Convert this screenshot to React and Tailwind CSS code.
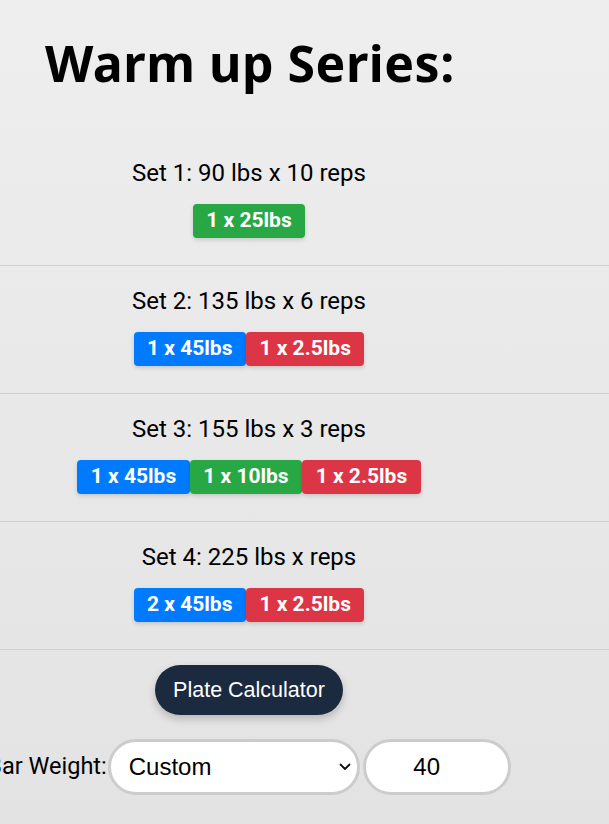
import React from "react";

const sets = [
  { label: "Set 1: 90 lbs x 10 reps", plates: [["1 x 25lbs", "bg-[#28a745]"]] },
  { label: "Set 2: 135 lbs x 6 reps", plates: [["1 x 45lbs", "bg-[#007bff]"], ["1 x 2.5lbs", "bg-[#dc3545]"]] },
  { label: "Set 3: 155 lbs x 3 reps", plates: [["1 x 45lbs", "bg-[#007bff]"], ["1 x 10lbs", "bg-[#28a745]"], ["1 x 2.5lbs", "bg-[#dc3545]"]] },
  { label: "Set 4: 225 lbs x reps", plates: [["2 x 45lbs", "bg-[#007bff]"], ["1 x 2.5lbs", "bg-[#dc3545]"]] },
];

export default function App() {
  return (
    <div className="w-[609px] h-[824px] overflow-hidden bg-gradient-to-b from-[#eeeeee] to-[#e3e3e3] text-black" style={{ fontFamily: "Roboto, sans-serif" }}>
      <div className="h-[138px] pl-[45px] pt-[29px]">
        <h1 className="text-[50px] font-bold leading-[68px] tracking-[0.5px]" style={{ fontFamily: "'Noto Sans', sans-serif" }}>
          Warm up Series:
        </h1>
      </div>
      {sets.map((s, i) => (
        <div key={i} className={`h-[128px] pt-5 ${i < 4 ? "border-b border-[#d0d0d0]" : ""}`}>
          <div className="w-[498px] flex flex-col items-center">
            <div className="text-[24px] leading-[30px]">{s.label}</div>
            <div className="mt-4 flex">
              {s.plates.map(([t, c], j) => (
                <span key={j} className={`${c} h-[34px] px-[13.5px] flex items-center rounded-[4px] text-white font-bold text-[21px] shadow-[0_2px_4px_rgba(0,0,0,0.15)]`}>
                  {t}
                </span>
              ))}
            </div>
          </div>
        </div>
      ))}
      <div className="w-[498px] flex flex-col items-center">
        <button className="mt-[15px] h-[50px] w-[188px] rounded-full bg-[#1b2a3e] text-white text-[21.5px] shadow-[0_4px_8px_rgba(0,0,0,0.2)]" style={{ fontFamily: "'Liberation Sans', Arial, sans-serif" }}>
          Plate Calculator
        </button>
        <div className="mt-[24px] flex items-center justify-center w-[498px]">
          <span className="text-[23.5px] whitespace-nowrap">Bar Weight:</span>
          <div className="relative ml-[1px] w-[252px] h-[56px] shrink-0 rounded-full border-[3px] border-[#cccccc] bg-white flex items-center pl-[18px]" style={{ fontFamily: "'Liberation Sans', Arial, sans-serif" }}>
            <span className="text-[24px] text-black">Custom</span>
            <svg className="absolute right-[6px] top-1/2 -translate-y-1/2" width="12" height="8" viewBox="0 0 12 8" fill="none">
              <path d="M1.5 1.5 L6 6 L10.5 1.5" stroke="#111" strokeWidth="1.8" strokeLinecap="round" strokeLinejoin="round" />
            </svg>
          </div>
          <div className="ml-[3px] w-[148px] h-[56px] shrink-0 rounded-full border-[3px] border-[#cccccc] bg-white flex items-center justify-center pr-[20px]" style={{ fontFamily: "'Liberation Sans', Arial, sans-serif" }}>
            <span className="text-[24px]">40</span>
          </div>
        </div>
      </div>
    </div>
  );
}
